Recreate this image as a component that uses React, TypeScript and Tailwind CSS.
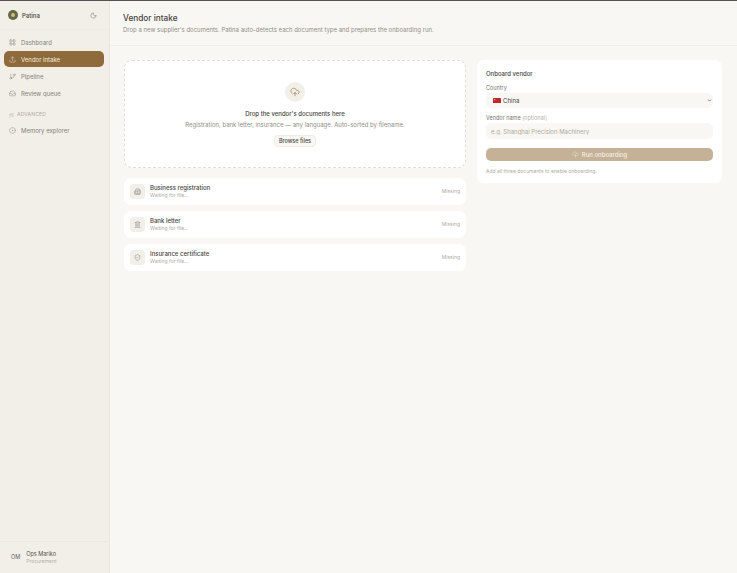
import React from 'react';
import {
  LayoutGrid,
  Upload,
  GitBranch,
  Inbox,
  CircleDot,
  Moon,
  CloudUpload,
  Building2,
  Landmark,
  ShieldCheck,
  Wand2,
  ChevronDown,
} from 'lucide-react';

const navItems = [
  { label: 'Dashboard', icon: LayoutGrid },
  { label: 'Vendor intake', icon: Upload, active: true },
  { label: 'Pipeline', icon: GitBranch },
  { label: 'Review queue', icon: Inbox },
];

const docs = [
  { label: 'Business registration', icon: Building2 },
  { label: 'Bank letter', icon: Landmark },
  { label: 'Insurance certificate', icon: ShieldCheck },
];

function NavLink({ label, icon: Icon, active }: { label: string; icon: React.ElementType; active?: boolean }) {
  return (
    <div
      className={`h-[16px] rounded-[5px] px-[5px] flex items-center gap-[5px] text-[6px] ${
        active ? 'bg-[#8f6b3c] text-[#f3ecdf]' : 'text-[#85817a]'
      }`}
    >
      <Icon className="w-[7px] h-[7px]" strokeWidth={1.5} />
      {label}
    </div>
  );
}

export default function App() {
  return (
    <div className="h-[573px] w-[737px] overflow-hidden flex flex-col bg-[#f9f7f3] text-[#3a3834] font-['Inter',sans-serif]">
      <div className="h-px bg-[#55534f] shrink-0" />
      <div className="flex-1 flex min-h-0">
        {/* Sidebar */}
        <aside className="w-[110px] shrink-0 bg-[#f2efe9] border-r border-[#ece8e1] flex flex-col">
          <div className="h-[29px] pl-2 pr-[12px] flex items-center justify-between border-b border-[#efebe5]">
            <div className="flex items-center gap-[4px]">
              <div className="w-[10px] h-[10px] rounded-full bg-[#5f6b45] flex items-center justify-center">
                <div className="w-[4px] h-[4px] rounded-full bg-[#d8b878]" />
              </div>
              <span className="text-[6px] font-medium text-[#45423d]">Patina</span>
            </div>
            <Moon className="w-[7px] h-[7px] text-[#66625b]" strokeWidth={1.5} />
          </div>
          <nav className="pl-[4px] pr-[5px] pt-[4px] flex flex-col gap-[1px]">
            {navItems.map((item) => (
              <NavLink key={item.label} {...item} />
            ))}
          </nav>
          <div className="mt-[8px] px-[9px] h-[12px] flex items-center gap-[3px] text-[5px] tracking-[0.04em] text-[#aeaaa2]">
            <Wand2 className="w-[5px] h-[5px]" strokeWidth={1.5} />
            ADVANCED
          </div>
          <div className="pl-[4px] pr-[5px] pt-[1px]">
            <NavLink label="Memory explorer" icon={CircleDot} />
          </div>
          <div className="mt-auto h-[32px] border-t border-[#ece8e1] pl-[11px] flex items-center gap-[6px]">
            <span className="text-[5.5px] text-[#66625b]">OM</span>
            <div className="leading-[7px]">
              <div className="text-[5.5px] text-[#55524c]">Ops Mariko</div>
              <div className="text-[5px] text-[#b3afa7]">Procurement</div>
            </div>
          </div>
        </aside>

        {/* Main */}
        <main className="flex-1 min-w-0 flex flex-col">
          <header className="h-[45px] shrink-0 border-b border-[#f1eee8] pl-[13px] pt-[11px]">
            <h1 className="text-[8.25px] leading-[12px] font-medium text-[#45423d]">Vendor intake</h1>
            <p className="text-[6px] leading-[10px] mt-[1px] text-[#918d86]">
              Drop a new supplier's documents. Patina auto-detects each document type and prepares the onboarding run.
            </p>
          </header>

          <div className="pl-[14px] pr-[15px] pt-[14px] flex gap-[11px]">
            <div className="w-[342px] shrink-0 flex flex-col gap-[6px]">
              <section className="h-[108px] mb-[4px] rounded-[8px] bg-white border border-dashed border-[#e2ded7] flex flex-col items-center pt-[21px]">
                <div className="w-[20px] h-[20px] rounded-full bg-[#f2efe9] flex items-center justify-center">
                  <CloudUpload className="w-[10px] h-[10px] text-[#8f6b3c]" strokeWidth={1.5} />
                </div>
                <div className="mt-[7px] text-[6px] leading-[9px] font-medium text-[#45423d]">
                  Drop the vendor's documents here
                </div>
                <div className="mt-[2px] text-[6px] leading-[10px] text-[#918d86]">
                  Registration, bank letter, insurance — any language. Auto-sorted by filename.
                </div>
                <button className="mt-[5px] h-[12px] px-[4px] rounded-[4px] border border-[#efebe5] bg-[#faf8f5] text-[5.5px] font-medium text-[#45423d]">
                  Browse files
                </button>
              </section>

              {docs.map(({ label, icon: Icon }) => (
                <div key={label} className="h-[27px] rounded-[7px] bg-white px-[6px] flex items-center gap-[5px]">
                  <div className="w-[15px] h-[15px] rounded-[4px] bg-[#f2efe9] flex items-center justify-center">
                    <Icon className="w-[7px] h-[7px] text-[#77736c]" strokeWidth={1.5} />
                  </div>
                  <div className="flex-1 leading-[7.5px]">
                    <div className="text-[6px] font-medium text-[#45423d]">{label}</div>
                    <div className="text-[5px] text-[#aeaaa2]">Waiting for file...</div>
                  </div>
                  <span className="text-[5px] text-[#aeaaa2]">Missing</span>
                </div>
              ))}
            </div>

            <section className="flex-1 h-[123px] rounded-[7px] bg-white px-[9px] pt-[9px]">
              <h2 className="text-[6px] leading-[9px] font-medium text-[#45423d]">Onboard vendor</h2>
              <div className="mt-[6px] text-[5.5px] leading-[8px] text-[#77736c]">Country</div>
              <div className="relative mt-[1px]">
                <select className="block w-full h-[15px] appearance-none rounded-[5px] bg-[#f9f7f3] pl-[17px] pr-[8px] text-[6px] text-[#45423d] outline-none">
                  <option>China</option>
                </select>
                <svg viewBox="0 0 8 5" className="absolute left-[7px] top-[5px] w-[8px] h-[5px] pointer-events-none">
                  <rect width="8" height="5" rx="0.6" fill="#c0242f" />
                  <rect x="1" y="1" width="1.2" height="1.2" fill="#e8b23a" />
                </svg>
                <ChevronDown className="absolute right-[1px] top-[5px] w-[5px] h-[5px] text-[#45423d] pointer-events-none" strokeWidth={3} />
              </div>
              <div className="mt-[5.5px] text-[5.5px] leading-[8px] text-[#77736c]">
                Vendor name <span className="text-[#b3afa7]">(optional)</span>
              </div>
              <input
                placeholder="e.g. Shanghai Precision Machinery"
                className="block mt-[1.5px] w-full h-[16px] rounded-[5px] bg-[#f9f7f3] px-[5px] text-[6px] outline-none placeholder:text-[#aeaaa2]"
              />
              <button className="mt-[9px] w-full h-[13px] rounded-[5px] bg-[#c4b196] text-[#f5f0e7] text-[6px] font-medium flex items-center justify-center gap-[3px]">
                <CloudUpload className="w-[7px] h-[7px]" strokeWidth={1.5} />
                Run onboarding
              </button>
              <p className="mt-[6px] text-[5px] leading-[8px] text-[#aeaaa2]">Add all three documents to enable onboarding.</p>
            </section>
          </div>
        </main>
      </div>
    </div>
  );
}
